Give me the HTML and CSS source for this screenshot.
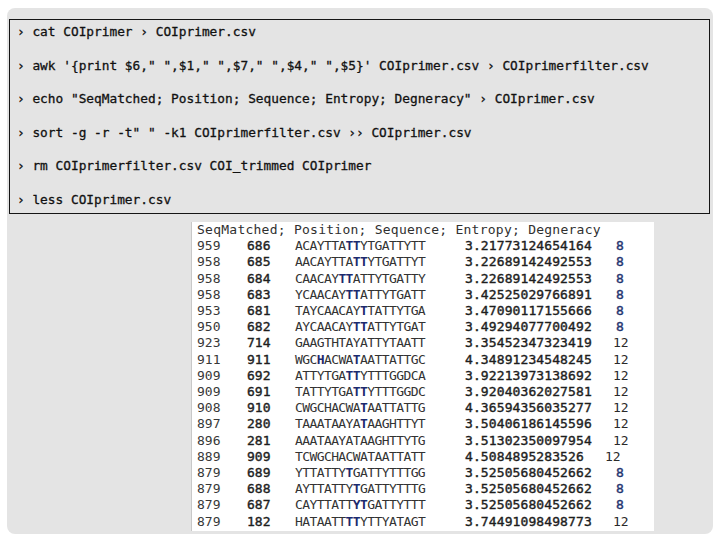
FILE: index.html
```html
<!DOCTYPE html>
<html>
<head>
<meta charset="utf-8">
<link rel="stylesheet" href="styles.css">
</head>
<body>
<div class="panel">
  <div class="term">
    <div class="line">› cat COIprimer › COIprimer.csv</div>
    <div class="line">› awk '{print $6," ",$1," ",$7," ",$4," ",$5}' COIprimer.csv › COIprimerfilter.csv</div>
    <div class="line">› echo "SeqMatched; Position; Sequence; Entropy; Degneracy" › COIprimer.csv</div>
    <div class="line">› sort -g -r -t" " -k1 COIprimerfilter.csv ›› COIprimer.csv</div>
    <div class="line">› rm COIprimerfilter.csv COI_trimmed COIprimer</div>
    <div class="line">› less COIprimer.csv</div>
  </div>
  <div class="table">
    <div class="head">SeqMatched; Position; Sequence; Entropy; Degneracy</div>
    <div class="row"><span class="c1">959</span><span class="c2">686</span><span class="c3">ACAYTTA<b>TT</b>YTGATTYTT</span><span class="c4">3.21773124654164</span><span class="c5 d8">8</span></div>
    <div class="row"><span class="c1">958</span><span class="c2">685</span><span class="c3">AACAYTTA<b>TT</b>YTGATTYT</span><span class="c4">3.22689142492553</span><span class="c5 d8">8</span></div>
    <div class="row"><span class="c1">958</span><span class="c2">684</span><span class="c3">CAACAY<b>TT</b>ATTYTGATTY</span><span class="c4">3.22689142492553</span><span class="c5 d8">8</span></div>
    <div class="row"><span class="c1">958</span><span class="c2">683</span><span class="c3">YCAACAY<b>TT</b>ATTYTGATT</span><span class="c4">3.42525029766891</span><span class="c5 d8">8</span></div>
    <div class="row"><span class="c1">953</span><span class="c2">681</span><span class="c3">TAYCAACAY<b>T</b>TATTYTGA</span><span class="c4">3.47090117155666</span><span class="c5 d8">8</span></div>
    <div class="row"><span class="c1">950</span><span class="c2">682</span><span class="c3">AYCAACAY<b>TT</b>ATTYTGAT</span><span class="c4">3.49294077700492</span><span class="c5 d8">8</span></div>
    <div class="row"><span class="c1">923</span><span class="c2">714</span><span class="c3">GAAGTHTAYATTYTAATT</span><span class="c4">3.35452347323419</span><span class="c5">12</span></div>
    <div class="row"><span class="c1">911</span><span class="c2">911</span><span class="c3">WGC<b>H</b>ACWA<b>T</b>AATTATTGC</span><span class="c4">4.34891234548245</span><span class="c5">12</span></div>
    <div class="row"><span class="c1">909</span><span class="c2">692</span><span class="c3">ATTYTGA<b>TT</b>YTTTGGDCA</span><span class="c4">3.92213973138692</span><span class="c5">12</span></div>
    <div class="row"><span class="c1">909</span><span class="c2">691</span><span class="c3">TATTYTGA<b>TT</b>YTTTGGDC</span><span class="c4">3.92040362027581</span><span class="c5">12</span></div>
    <div class="row"><span class="c1">908</span><span class="c2">910</span><span class="c3">CWGCHACWA<b>T</b>AATTATTG</span><span class="c4">4.36594356035277</span><span class="c5">12</span></div>
    <div class="row"><span class="c1">897</span><span class="c2">280</span><span class="c3">TAAATAAYA<b>T</b>AAGHTTYT</span><span class="c4">3.50406186145596</span><span class="c5">12</span></div>
    <div class="row"><span class="c1">896</span><span class="c2">281</span><span class="c3">AAATAAYATAAGHTTYTG</span><span class="c4">3.51302350097954</span><span class="c5">12</span></div>
    <div class="row"><span class="c1">889</span><span class="c2">909</span><span class="c3">TCWGCHACWATAATTATT</span><span class="c4">4.5084895283526</span><span class="c5 short">12</span></div>
    <div class="row"><span class="c1">879</span><span class="c2">689</span><span class="c3">YTTATTY<b>T</b>GATTYTTTGG</span><span class="c4">3.52505680452662</span><span class="c5 d8">8</span></div>
    <div class="row"><span class="c1">879</span><span class="c2">688</span><span class="c3">AYTTATTY<b>T</b>GATTYTTTG</span><span class="c4">3.52505680452662</span><span class="c5 d8">8</span></div>
    <div class="row"><span class="c1">879</span><span class="c2">687</span><span class="c3">CAYTTATT<b>YT</b>GATTYTTT</span><span class="c4">3.52505680452662</span><span class="c5 d8">8</span></div>
    <div class="row"><span class="c1">879</span><span class="c2">182</span><span class="c3">HATAATT<b>TT</b>YTTYATAGT</span><span class="c4">3.74491098498773</span><span class="c5">12</span></div>
  </div>
</div>
</body>
</html>
```

FILE: styles.css
```css
html, body {
  margin: 0;
  padding: 0;
  background: #ffffff;
}

.panel {
  margin: 8px 0 0 7px;
  width: 706px;
  height: 526px;
  background: #e4e4e4;
  border-radius: 8px;
  box-sizing: border-box;
  padding-top: 11px;
  overflow: hidden;
}

.term {
  margin-left: 2px;
  width: 701px;
  height: 195px;
  box-sizing: border-box;
  border: 1px solid #151515;
  padding: 2px 0 0 7px;
  display: flex;
  flex-direction: column;
  gap: 13.6px;
  font-family: "DejaVu Sans Mono", "Liberation Mono", monospace;
  font-size: 12.8px;
  color: #111111;
}

.line {
  line-height: 20px;
  height: 20px;
  white-space: pre;
  -webkit-text-stroke: 0.3px #111;
}

.table {
  margin: 8px 0 0 185px;
  width: 462px;
  height: 309px;
  background: #ffffff;
  box-shadow: -1px 0 0 #c8c8c8;
  box-sizing: border-box;
  padding: 0 0 0 5px;
  font-family: "DejaVu Sans Mono", "Liberation Mono", monospace;
  font-size: 13px;
  line-height: 16.2px;
  color: #2a2a2a;
}

.head {
  white-space: pre;
  letter-spacing: 0.25px;
  color: #303030;
}

.row {
  display: grid;
  grid-template-columns: 50px 48px 170px 148px auto;
  white-space: pre;
}

.c1 {
  color: #383838;
}

.c2 {
  color: #1e1e1e;
  -webkit-text-stroke: 0.4px #1e1e1e;
}

.c3 {
  color: #333333;
  letter-spacing: -0.6px;
}

.c3 b {
  color: #1c2a6e;
  font-weight: bold;
}

.c4 {
  color: #1e1e1e;
  letter-spacing: 0.1px;
  -webkit-text-stroke: 0.4px #1e1e1e;
}

.c5 {
  color: #2a2a2a;
}

.c5.d8 {
  padding-left: 3px;
  color: #1f3470;
  -webkit-text-stroke: 0.4px #1f3470;
}

.c5.short {
  margin-left: -8px;
}
```
